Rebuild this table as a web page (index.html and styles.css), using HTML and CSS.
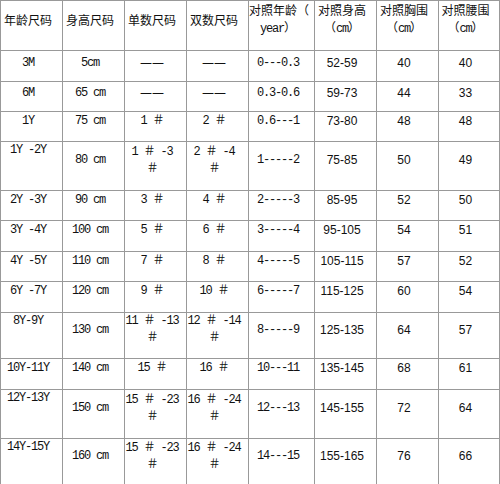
FILE: index.html
```html
<!DOCTYPE html>
<html lang="zh">
<head>
<meta charset="utf-8">
<title>尺码表</title>
<link rel="stylesheet" href="styles.css">
</head>
<body>
<table class="size-table">
  <colgroup>
    <col class="c62"><col class="c62"><col class="c62"><col class="c62">
    <col class="c66"><col class="c62"><col class="c62"><col class="c61">
  </colgroup>
  <tr class="head">
    <td class="cn">年龄尺码</td>
    <td class="cn">身高尺码</td>
    <td class="cn">单数尺码</td>
    <td class="cn">双数尺码</td>
    <td class="cn">对照年龄（<br><span class="mono">year</span>）</td>
    <td class="cn">对照身高<br>（<span class="mono">cm</span>）</td>
    <td class="cn">对照胸围<br>（<span class="mono">cm</span>）</td>
    <td class="cn">对照腰围<br>（<span class="mono">cm</span>）</td>
  </tr>
  <tr class="r31 early">
    <td class="mono">3M</td><td class="mono">5cm</td><td class="dash">——</td><td class="dash">——</td>
    <td class="mono">0---0.3</td><td class="sans">52-59</td><td class="sans">40</td><td class="sans">40</td>
  </tr>
  <tr class="r30 early">
    <td class="mono">6M</td><td class="mono">65 cm</td><td class="dash">——</td><td class="dash">——</td>
    <td class="mono">0.3-0.6</td><td class="sans">59-73</td><td class="sans">44</td><td class="sans">33</td>
  </tr>
  <tr class="r30">
    <td class="mono">1Y</td><td class="mono">75 cm</td><td class="mono">1 ＃</td><td class="mono">2 ＃</td>
    <td class="mono">0.6---1</td><td class="sans">73-80</td><td class="sans">48</td><td class="sans">48</td>
  </tr>
  <tr class="r49 tall">
    <td class="mono first">1Y -2Y</td><td class="mono">80 cm</td><td class="mono">1 ＃ -3<br>＃</td><td class="mono">2 ＃ -4<br>＃</td>
    <td class="mono">1-----2</td><td class="sans">75-85</td><td class="sans">50</td><td class="sans">49</td>
  </tr>
  <tr class="r30">
    <td class="mono">2Y -3Y</td><td class="mono">90 cm</td><td class="mono">3 ＃</td><td class="mono">4 ＃</td>
    <td class="mono">2-----3</td><td class="sans">85-95</td><td class="sans">52</td><td class="sans">50</td>
  </tr>
  <tr class="r31">
    <td class="mono">3Y -4Y</td><td class="mono">100 cm</td><td class="mono">5 ＃</td><td class="mono">6 ＃</td>
    <td class="mono">3-----4</td><td class="sans">95-105</td><td class="sans">54</td><td class="sans">51</td>
  </tr>
  <tr class="r30">
    <td class="mono">4Y -5Y</td><td class="mono">110 cm</td><td class="mono">7 ＃</td><td class="mono">8 ＃</td>
    <td class="mono">4-----5</td><td class="sans">105-115</td><td class="sans">57</td><td class="sans">52</td>
  </tr>
  <tr class="r31">
    <td class="mono">6Y -7Y</td><td class="mono">120 cm</td><td class="mono">9 ＃</td><td class="mono">10 ＃</td>
    <td class="mono">6-----7</td><td class="sans">115-125</td><td class="sans">60</td><td class="sans">54</td>
  </tr>
  <tr class="r46 tall">
    <td class="mono first">8Y-9Y</td><td class="mono">130 cm</td><td class="mono">11 ＃ -13<br>＃</td><td class="mono">12 ＃ -14<br>＃</td>
    <td class="mono">8-----9</td><td class="sans">125-135</td><td class="sans">64</td><td class="sans">57</td>
  </tr>
  <tr class="r31">
    <td class="mono">10Y-11Y</td><td class="mono">140 cm</td><td class="mono">15 ＃</td><td class="mono">16 ＃</td>
    <td class="mono">10---11</td><td class="sans">135-145</td><td class="sans">68</td><td class="sans">61</td>
  </tr>
  <tr class="r49 tall">
    <td class="mono first">12Y-13Y</td><td class="mono">150 cm</td><td class="mono">15 ＃ -23<br>＃</td><td class="mono">16 ＃ -24<br>＃</td>
    <td class="mono">12---13</td><td class="sans">145-155</td><td class="sans">72</td><td class="sans">64</td>
  </tr>
  <tr class="r47 tall">
    <td class="mono first">14Y-15Y</td><td class="mono">160 cm</td><td class="mono">15 ＃ -23<br>＃</td><td class="mono">16 ＃ -24<br>＃</td>
    <td class="mono">14---15</td><td class="sans">155-165</td><td class="sans">76</td><td class="sans">66</td>
  </tr>
</table>
</body>
</html>
```
FILE: styles.css
```css
html, body {
  margin: 0;
  padding: 0;
  background: #ffffff;
}

.size-table {
  border-collapse: collapse;
  table-layout: fixed;
  width: 500px;
  color: #111;
  font-size: 12px;
  line-height: 17px;
}

.c62 { width: 62px; }
.c66 { width: 66px; }
.c61 { width: 61px; }

.size-table td {
  border: 1px solid #999;
  padding: 0 7px 11px 0;
  text-align: center;
  vertical-align: middle;
  white-space: nowrap;
  overflow: visible;
}

.size-table .head { height: 47px; }
.size-table .head td { padding-bottom: 12px; }

.r30 { height: 30px; }
.r31 { height: 31px; }
.r46 { height: 46px; }
.r47 { height: 47px; }
.r49 { height: 49px; }

.size-table .early td { padding-bottom: 6px; }

.size-table .tall td.first {
  vertical-align: top;
  padding-top: 0;
  padding-bottom: 0;
}

.cn {
  font-family: "Noto Sans CJK SC", "Liberation Sans", sans-serif;
}

.dash {
  font-family: "DejaVu Sans", "Liberation Sans", sans-serif;
  letter-spacing: 0;
}

.mono {
  font-family: "Liberation Mono", "Noto Sans CJK SC", monospace;
  letter-spacing: -1.2px;
}

.sans {
  font-family: "Liberation Sans", "Noto Sans CJK SC", sans-serif;
}
```
